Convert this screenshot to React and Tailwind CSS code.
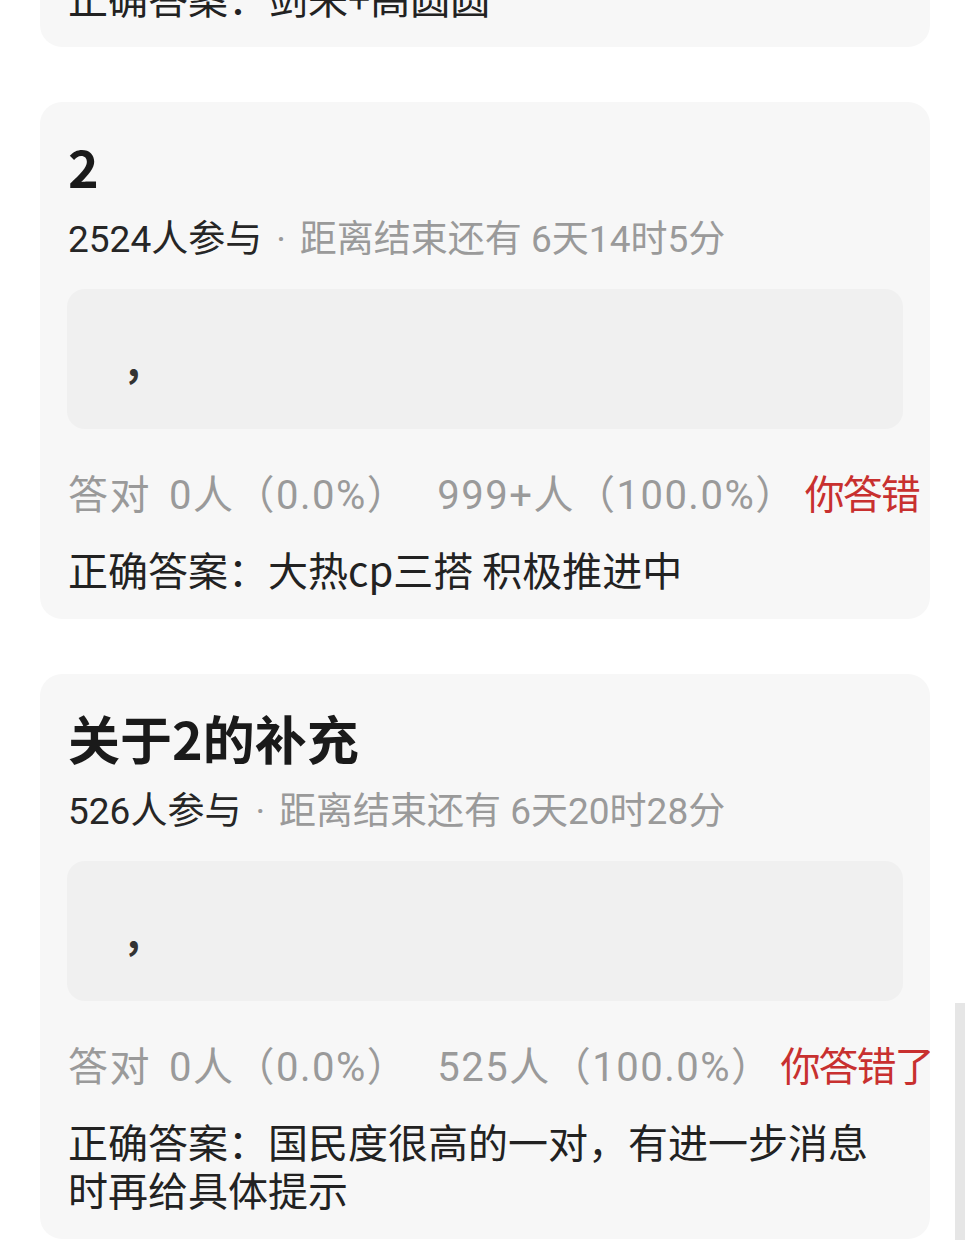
import React from 'react';

const quizzes = [
  {
    title: '2',
    joined: '2524人参与',
    remain: '距离结束还有 6天14时5分',
    wrong: '999+人（100.0%）',
    verdict: '你答错',
    answer: '正确答案：大热cp三搭 积极推进中',
  },
  {
    title: '关于2的补充',
    joined: '526人参与',
    remain: '距离结束还有 6天20时28分',
    wrong: '525人（100.0%）',
    verdict: '你答错了',
    answer: '正确答案：国民度很高的一对，有进一步消息时再给具体提示',
  },
];

function QuizCard({ quiz }) {
  return (
    <div className="overflow-hidden rounded-[22px] bg-[#f7f7f7] px-[28px] pt-[32px] pb-[26px]">
      {/* title */}
      <h2 className="text-[52px] leading-[64px] font-bold text-[#1a1a1a]">{quiz.title}</h2>

      {/* meta */}
      <p className="mt-[18px] flex text-[37px] leading-[48px] whitespace-nowrap font-['Roboto','Noto_Sans_CJK_SC',sans-serif]">
        <span className="text-[#262626]">{quiz.joined}</span>
        <span className="mx-[14px] text-[#9a9a9a]">·</span>
        <span className="text-[#9a9a9a]">{quiz.remain}</span>
      </p>

      {/* options box */}
      <div className="mt-[25px] -mx-px flex h-[140px] items-center rounded-[18px] bg-[#f0f0f0] pl-[60px]">
        <span className="text-[40px] font-bold text-[#333]">,</span>
      </div>

      {/* stats */}
      <div className="mt-[41px] flex text-[40px] leading-[52px] tracking-[1.5px] whitespace-nowrap text-[#9a9a9a] font-['Roboto','Noto_Sans_CJK_SC',sans-serif]">
        <span>答对</span>
        <span className="ml-[18px]">0人（0.0%）</span>
        <span className="ml-[29px]">{quiz.wrong}</span>
        <span className="ml-[8px] tracking-[-2px] text-[#c8302f]">{quiz.verdict}</span>
      </div>

      {/* answer */}
      <p className="mt-[23px] text-[40px] leading-[48px] text-[#222]">{quiz.answer}</p>
    </div>
  );
}

export default function App() {
  return (
    <div className="relative h-[1247px] overflow-hidden bg-white font-['Noto_Sans_CJK_SC','Noto_Sans',sans-serif]">
      <div className="flex flex-col gap-[55px] px-[40px]">
        {/* previous card, mostly scrolled off */}
        <div className="-mt-[27px] rounded-b-[22px] bg-[#f7f7f7] px-[28px] pb-[26px]">
          <p className="text-[40px] leading-[48px] text-[#222]">正确答案：剑来+高圆圆</p>
        </div>

        {quizzes.map((q) => (
          <QuizCard key={q.title} quiz={q} />
        ))}
      </div>

      {/* scrollbar strip */}
      <div className="absolute top-[1003px] right-[5px] h-[237px] w-[10px] bg-[#e6e6e6]" />
    </div>
  );
}
